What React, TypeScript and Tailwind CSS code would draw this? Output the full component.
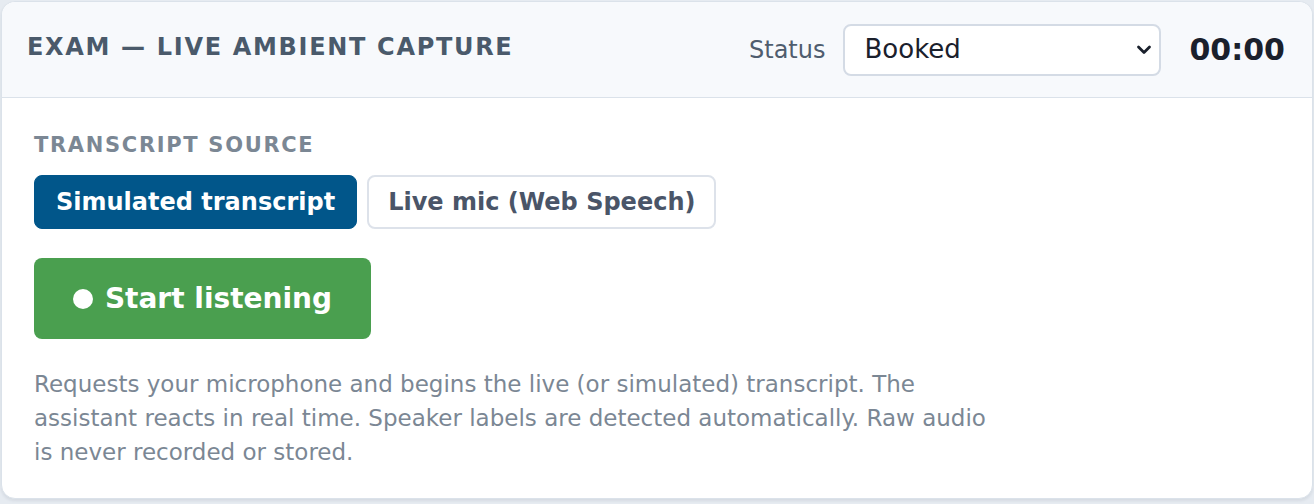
import React from 'react';

const sources = ['Simulated transcript', 'Live mic (Web Speech)'];

export default function App() {
  const [source, setSource] = React.useState(0);
  const [status, setStatus] = React.useState('Booked');

  return (
    <div className="min-h-screen bg-[#e6ebf1] p-px font-['DejaVu_Sans',sans-serif]">
      <div className="h-[498px] overflow-hidden rounded-[14px] border border-[#dbe2ea] bg-white shadow-[0_2px_3px_rgba(30,41,59,0.08)]">
        <div className="flex h-[96px] items-center border-b border-[#dbe2ea] bg-[#f7f9fc] pl-[25px] pr-[27px]">
          <h2 className="mb-[6px] flex-1 text-[24px] leading-[30px] font-bold tracking-[0.07em] text-[#4a5a6b]">
            EXAM — LIVE AMBIENT CAPTURE
          </h2>
          <span className="mr-[17px] text-[24px] text-[#4f5d6e]">Status</span>
          <div className="relative">
            <select
              value={status}
              onChange={(e) => setStatus(e.target.value)}
              className="h-[52px] w-[318px] appearance-none rounded-[8px] border-2 border-[#d4dbe5] bg-white pl-[20px] text-[26px] text-[#1a202c] outline-none"
            >
              <option>Booked</option>
              <option>Checked in</option>
              <option>In exam</option>
              <option>Completed</option>
            </select>
            <svg
              className="pointer-events-none absolute right-[9px] top-[19px]"
              width="16"
              height="14"
              viewBox="0 0 16 14"
              fill="none"
            >
              <path d="M2.5 4l5.5 5.5 5.5-5.5" stroke="#1a202c" strokeWidth="2.8" strokeLinecap="round" strokeLinejoin="round" />
            </svg>
          </div>
          <span className="ml-[29px] text-[30px] font-bold text-[#1a202c]">00:00</span>
        </div>

        <div className="px-[32px] pt-[35px]">
          <div className="text-[21px] leading-[24px] font-bold tracking-[0.08em] text-[#7b8794]">TRANSCRIPT SOURCE</div>
          <div className="mt-[18px] flex gap-[10px]">
            {sources.map((s, i) => (
              <button
                key={s}
                onClick={() => setSource(i)}
                className={
                  i === source
                    ? 'h-[54px] rounded-[8px] border border-[#01568a] bg-[#01568a] px-[21px] text-[24px] font-bold text-white'
                    : 'h-[54px] rounded-[8px] border-2 border-[#dde2ea] bg-white px-[19px] text-[24px] font-bold text-[#4a5568]'
                }
              >
                {s}
              </button>
            ))}
          </div>
          <button className="mt-[29px] flex h-[81px] w-[337px] items-center justify-center gap-[12px] rounded-[8px] bg-[#4a9f4f] text-[28px] font-bold text-white">
            <span className="inline-block h-[20px] w-[20px] rounded-full bg-white" />
            Start listening
          </button>
          <p className="mt-[28px] max-w-[970px] text-[23px] leading-[34px] text-[#7b8794]">
            Requests your microphone and begins the live (or simulated) transcript. The assistant reacts in real time.
            Speaker labels are detected automatically. Raw audio is never recorded or stored.
          </p>
        </div>
      </div>
    </div>
  );
}
